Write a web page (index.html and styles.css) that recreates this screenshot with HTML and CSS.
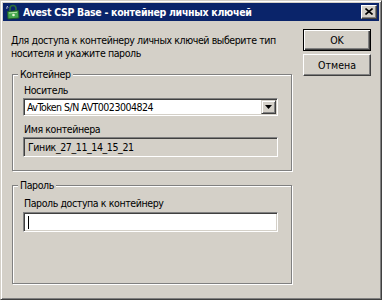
FILE: index.html
```html
<!DOCTYPE html>
<html>
<head>
<meta charset="utf-8">
<link rel="stylesheet" href="styles.css">
</head>
<body>
<div class="window">
  <div class="titlebar">
    <svg class="app-icon" width="16" height="16" viewBox="0 0 16 16">
      <path d="M5 7 V4.5 A3 3 0 0 1 11 4.5 V7" fill="none" stroke="#2f6e3a" stroke-width="1.6"/>
      <path d="M2.5 7.5 L13.5 6.5 L14 14 L3 15 Z" fill="#47a84e" stroke="#1f5a2a" stroke-width="1"/>
      <path d="M4 9 L12 8.3" stroke="#b6e6a8" stroke-width="1"/>
      <circle cx="8.5" cy="11" r="1.3" fill="#e8f7d8"/>
      <path d="M2 2 L3 3.5 M1 4 L2.5 4" stroke="#ffffff" stroke-width="0.8"/>
    </svg>
    <span class="title">Avest CSP Base - контейнер личных ключей</span>
    <div class="close-btn">
      <svg width="8" height="7" viewBox="0 0 8 7">
        <path d="M0.5 0.5 L7.5 6.5 M7.5 0.5 L0.5 6.5" stroke="#000" stroke-width="1.6"/>
      </svg>
    </div>
  </div>
  <div class="client">
    <div class="left-col">
      <p class="intro">Для доступа к контейнеру личных ключей выберите тип носителя и укажите пароль</p>
      <fieldset class="group">
        <legend class="group-title">Контейнер</legend>
        <div class="group-body group-body-container">
          <div class="label">Носитель</div>
          <div class="combo">
            <span class="combo-text">AvToken S/N AVT0023004824</span>
            <span class="combo-btn">
              <svg width="7" height="4" viewBox="0 0 7 4"><path d="M0 0 H7 L3.5 4 Z" fill="#000"/></svg>
            </span>
          </div>
          <div class="label label-gap">Имя контейнера</div>
          <div class="field field-readonly">Гиник_27_11_14_15_21</div>
        </div>
      </fieldset>
      <fieldset class="group group-second">
        <legend class="group-title">Пароль</legend>
        <div class="group-body group-body-password">
          <div class="label">Пароль доступа к контейнеру</div>
          <div class="field field-input"><span class="caret"></span></div>
        </div>
      </fieldset>
    </div>
    <div class="right-col">
      <div class="btn btn-default">OK</div>
      <div class="btn">Отмена</div>
    </div>
  </div>
</div>
</body>
</html>
```
FILE: styles.css
```css
* { box-sizing: border-box; }
html, body { margin: 0; padding: 0; }
body {
  width: 382px;
  height: 300px;
  overflow: hidden;
  background: #D4D0C8;
  font-family: "DejaVu Sans Condensed", "DejaVu Sans", sans-serif;
  font-stretch: condensed;
  font-size: 10.5px;
  letter-spacing: -0.4px;
  color: #000;
}
.window {
  width: 382px;
  height: 300px;
  background: #D4D0C8;
  border: 1px solid;
  border-color: #D4D0C8 #404040 #404040 #D4D0C8;
  box-shadow: inset 1px 1px 0 #fff, inset -1px -1px 0 #808080;
  padding: 2px;
}
.titlebar {
  height: 18px;
  background: #0A246A;
  display: flex;
  align-items: center;
  padding-left: 2px;
  padding-right: 2px;
}
.app-icon { flex: none; }
.title {
  color: #fff;
  font-weight: bold;
  font-size: 10.5px;
  letter-spacing: -0.3px;
  margin-left: 2px;
  flex: 1;
  white-space: nowrap;
}
.close-btn {
  width: 16px;
  height: 14px;
  background: #D4D0C8;
  border: 1px solid;
  border-color: #fff #404040 #404040 #fff;
  box-shadow: inset -1px -1px 0 #808080;
  display: flex;
  align-items: center;
  justify-content: center;
  padding-bottom: 1px;
}
.client {
  display: flex;
}
.left-col {
  width: 292px;
  flex: none;
  padding-left: 8px;
}
.intro {
  margin: 13px 0 0 0;
  line-height: 13px;
  width: 284px;
}
.group {
  margin: 8px 0 0 1px;
  padding: 0;
  width: 280px;
  border: 1px solid #808080;
  box-shadow: inset 1px 1px 0 #fff, 1px 1px 0 #fff;
  min-width: 0;
}
.group-second { margin-top: 8px; }
.group-title {
  padding: 0 2px;
  margin-left: 5px;
  line-height: 13px;
  background: #D4D0C8;
}
.group-body {
  padding-left: 10px;
}
.group-body-container { padding-top: 3px; padding-bottom: 13px; }
.group-body-password { padding-top: 5px; padding-bottom: 51px; }
.label {
  line-height: 13px;
  padding-left: 1px;
}
.label-gap { margin-top: 7px; }
.combo {
  margin-top: 1px;
  width: 255px;
  height: 18px;
  background: #fff;
  border: 1px solid;
  border-color: #808080 #fff #fff #808080;
  box-shadow: inset 1px 1px 0 #404040, inset -1px -1px 0 #D4D0C8;
  display: flex;
  align-items: center;
  padding: 1px 2px 1px 3px;
}
.combo-text { flex: 1; white-space: nowrap; letter-spacing: -0.5px; }
.combo-btn {
  width: 15px;
  height: 14px;
  background: #D4D0C8;
  border: 1px solid;
  border-color: #D4D0C8 #404040 #404040 #D4D0C8;
  box-shadow: inset 1px 1px 0 #fff, inset -1px -1px 0 #808080;
  display: flex;
  align-items: center;
  justify-content: center;
  margin-right: -1px;
}
.field {
  margin-top: 1px;
  width: 255px;
  height: 20px;
  border: 1px solid;
  border-color: #808080 #fff #fff #808080;
  box-shadow: inset 1px 1px 0 #404040, inset -1px -1px 0 #D4D0C8;
  padding: 0 4px;
  display: flex;
  align-items: center;
  white-space: nowrap;
}
.field-readonly { background: #D4D0C8; letter-spacing: -0.4px; }
.field-input { background: #fff; margin-top: 2px; }
.caret {
  display: block;
  width: 1px;
  height: 13px;
  background: #000;
}
.right-col {
  padding-left: 8px;
  padding-top: 8px;
  display: flex;
  flex-direction: column;
  gap: 3px;
}
.btn {
  width: 68px;
  height: 22px;
  border: 1px solid;
  border-color: #fff #404040 #404040 #fff;
  box-shadow: inset -1px -1px 0 #808080;
  display: flex;
  align-items: center;
  justify-content: center;
  background: #D4D0C8;
  letter-spacing: 0;
}
.btn-default {
  border: 1px solid #000;
  box-shadow: inset 1px 1px 0 #fff, inset -1px -1px 0 #404040, inset -2px -2px 0 #808080;
}
```
